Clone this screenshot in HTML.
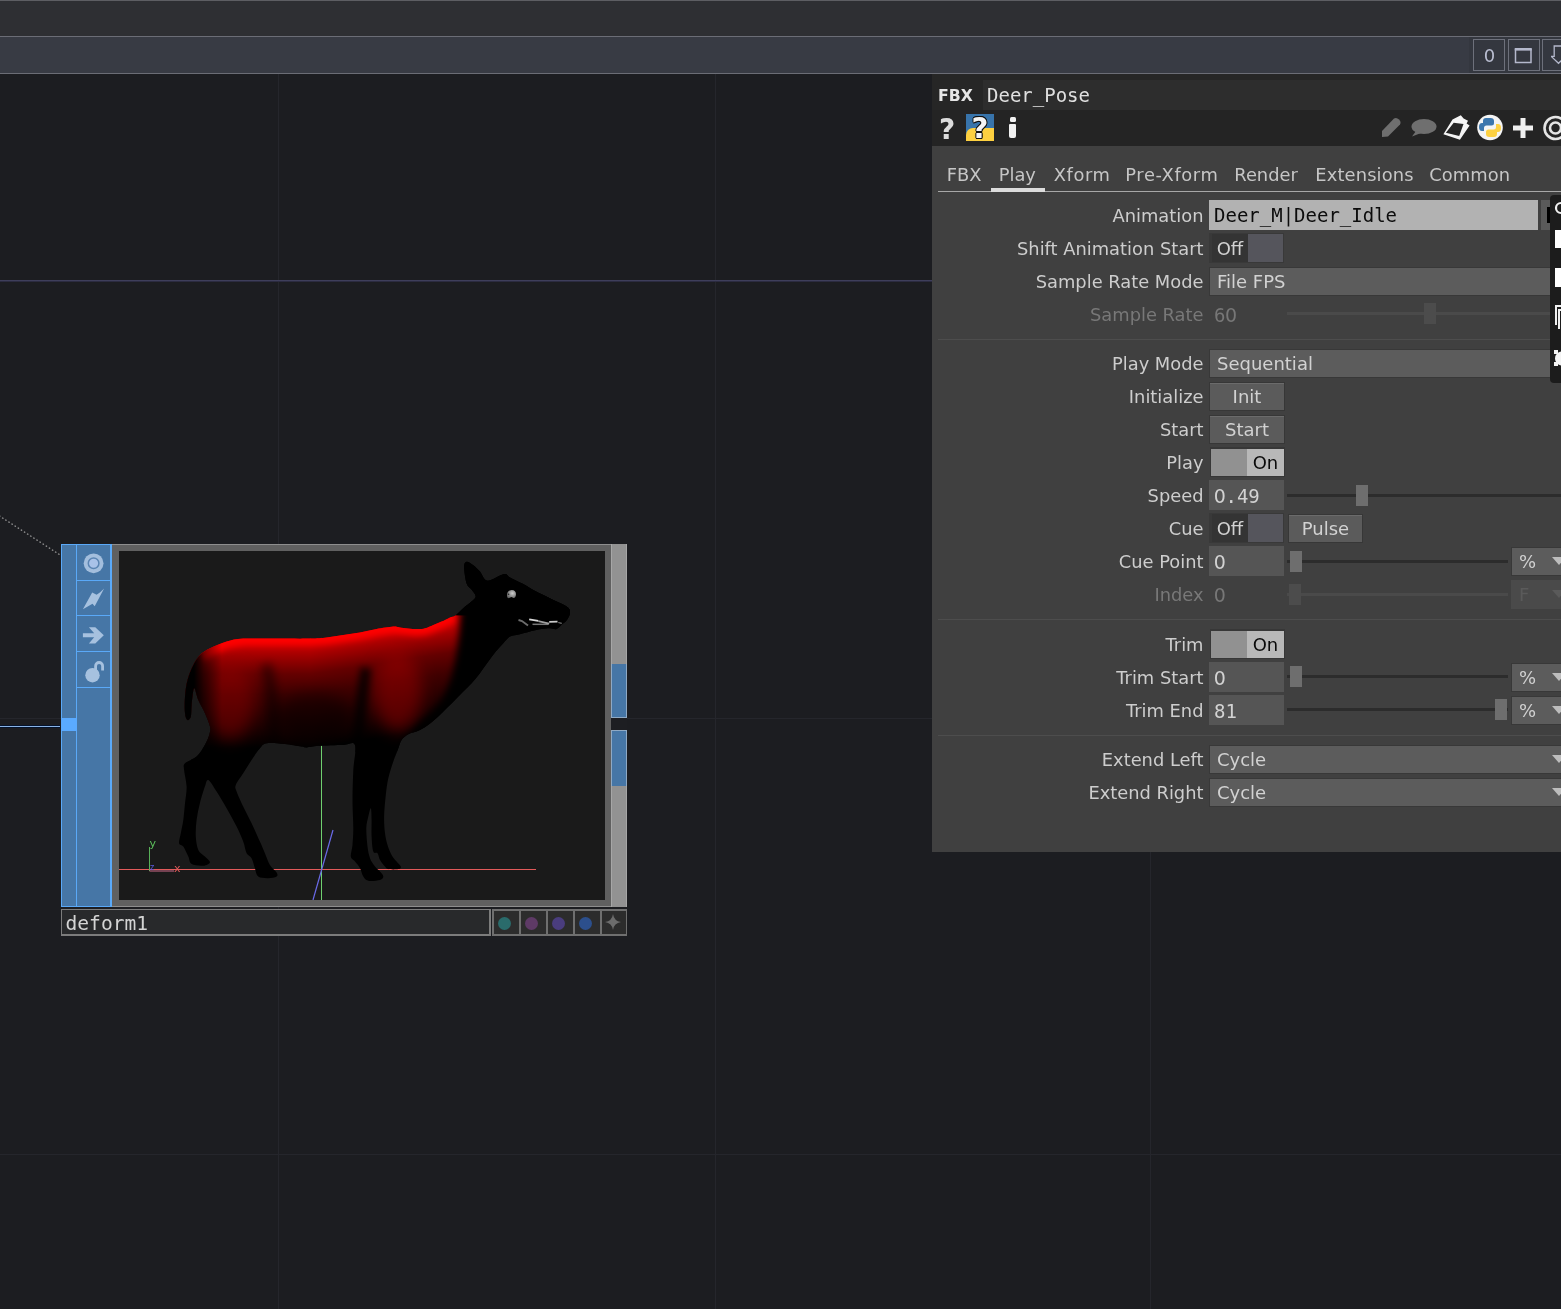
<!DOCTYPE html>
<html><head><meta charset="utf-8"><title>TouchDesigner</title>
<style>
html,body{margin:0;padding:0;}
body{width:1561px;height:1309px;overflow:hidden;background:#1c1d21;position:relative;font-family:"DejaVu Sans","Liberation Sans",sans-serif;font-size:18px;color:#cdcdcd;}
div,span,svg{position:absolute;box-sizing:border-box;}
.mono{font-family:"DejaVu Sans Mono","Liberation Mono",monospace;}
.lbl{right:357.5px;width:300px;text-align:right;height:30px;line-height:32px;font-size:17.85px;white-space:nowrap;color:#cdcdcd;}
.dis{color:#787878;}
.num{left:277px;width:75px;height:30px;background:#555;line-height:32px;padding-left:5px;font-family:"DejaVu Sans Mono","Liberation Mono",monospace;font-size:19px;color:#d2d2d2;}
.dd{left:277px;height:29px;background:#5c5c5c;border:1px solid #383838;line-height:28px;padding-left:7px;color:#d2d2d2;white-space:nowrap;}
.btn{height:29px;background:#5b5b5b;border:1px solid #373737;box-shadow:inset 0 1px 0 #6b6b6b;line-height:28px;text-align:center;color:#d2d2d2;}
.trk{height:3px;background:#2c2c2c;}
.knob{width:12px;height:21px;background:#6e6e6e;}
.sep{left:6px;right:0;height:1px;background:#4d4d4d;}
.arr{width:0;height:0;border-left:7px solid transparent;border-right:7px solid transparent;border-top:8px solid #bdbdbd;}
</style></head><body><div id="root" style="left:0;top:0;width:1561px;height:1309px;will-change:transform;">

<div style="left:0;top:0;width:1561px;height:37px;background:#2e2f33;border-top:1px solid #5d5e63;border-bottom:1px solid #6b6d76;"></div>
<div style="left:0;top:37px;width:1561px;height:37px;background:#383b44;border-bottom:1px solid #6b6d76;"></div>
<div style="left:1469px;top:37px;width:92px;height:36px;background:#34373f;"></div>
<div style="left:1473px;top:39px;width:32px;height:32px;border:1px solid #6d707b;color:#b9bdd0;text-align:center;line-height:31px;font-size:18px;text-indent:1px;">0</div>
<div style="left:1508px;top:39px;width:32px;height:32px;border:1px solid #6d707b;"><svg width="30" height="30" style="left:0;top:0" viewBox="0 0 30 30"><rect x="6.500" y="9.500" width="15.500" height="13" fill="none" stroke="#b4b8cc" stroke-width="1.500"/><rect x="5.750" y="8" width="17" height="2.500" fill="#b4b8cc"/></svg></div>
<div style="left:1542px;top:39px;width:32px;height:32px;border:1px solid #6d707b;"><svg width="20" height="24" style="left:8px;top:5px" viewBox="0 0 20 24"><path d="M3.200 1 H11.800 V11.400 H14.800 L7.500 18.300 L0.200 11.400 H3.200 Z" fill="none" stroke="#b4b8cc" stroke-width="1.300"/></svg></div>
<div style="left:278px;top:74px;width:1px;height:1235px;background:#25262c;"></div>
<div style="left:715px;top:74px;width:1px;height:1235px;background:#25262c;"></div>
<div style="left:1150px;top:74px;width:1px;height:1235px;background:#25262c;"></div>
<div style="left:0;top:718px;width:1561px;height:1px;background:#25262c;"></div>
<div style="left:0;top:1154px;width:1561px;height:1px;background:#25262c;"></div>
<div style="left:0;top:280px;width:1561px;height:1px;background:#3e3e5b;"></div>
<div style="left:0;top:281px;width:1561px;height:1px;background:#2b2b40;"></div>
<svg width="120" height="90" style="left:0;top:505px" viewBox="0 505 120 90"><line x1="-1" y1="515.700" x2="61" y2="555.500" stroke="#9c9c9c" stroke-width="1.300" stroke-dasharray="1.600 2.100"/></svg>
<div style="left:0;top:725px;width:60px;height:3px;background:#05142e;"></div>
<div style="left:0;top:726px;width:60px;height:1px;background:#8ab4e6;"></div>
<div id="node" style="left:61px;top:544px;width:566px;height:363px;">
<div style="left:0;top:0;width:51px;height:363px;background:#4676a6;border:1px solid #5aa9f8;border-right-width:2px;"></div>
<div style="left:15px;top:0;width:1px;height:363px;background:#5aa9f8;"></div>
<div style="left:15px;top:36px;width:35px;height:1px;background:#5aa9f8;"></div>
<div style="left:15px;top:71px;width:35px;height:1px;background:#5aa9f8;"></div>
<div style="left:15px;top:107px;width:35px;height:1px;background:#5aa9f8;"></div>
<div style="left:15px;top:143px;width:35px;height:1px;background:#5aa9f8;"></div>
<div style="left:0;top:174px;width:16px;height:13px;background:#5aaaff;"></div>
<svg width="36" height="144" style="left:15px;top:0" viewBox="0 0 36 144"><circle cx="17.6" cy="19.3" r="9.9" fill="#a3bedd"/><circle cx="17.6" cy="19.3" r="5.300" fill="#a9c2e8" stroke="#5a84b2" stroke-width="1.500"/><path d="M28.1 44.6 L24.2 48.2 L20.6 50.7 L16.2 48.4 L6.9 65.2 L16.5 59.7 L18.7 62.2 Z" fill="#a6c1df"/><path d="M12.9 83.3 H19.3 L27.8 91.3 L19.3 99.5 H12.9 L18.2 93.3 H6.9 V89.3 H18.2 Z" fill="#a6c1df"/><circle cx="16.5" cy="131.2" r="7.2" fill="#a6c1df"/><path d="M19.6 126 V122 a3.500 3.500 0 0 1 7 0 V126.500" fill="none" stroke="#a6c1df" stroke-width="2.800"/></svg>
<div style="left:51px;top:0;width:499px;height:363px;background:#606060;border-top:1px solid #8e8e8e;border-bottom:1px solid #8e8e8e;"></div>
<div style="left:58px;top:7px;width:486px;height:349px;background:#1a1a1a;"></div>
<div style="left:550px;top:0;width:16px;height:363px;background:#929292;border-left:1px solid #a6a6a6;border-right:1px solid #a6a6a6;"></div>
<div style="left:550px;top:120px;width:16px;height:54px;background:#4676a6;border:1px solid #8fa9c4;border-top:none;"></div>
<div style="left:550px;top:174px;width:16px;height:12px;background:#1d1e22;"></div>
<div style="left:550px;top:186px;width:16px;height:56px;background:#4676a6;border:1px solid #8fa9c4;border-bottom:none;"></div>
</div>
<svg width="486" height="349" style="left:119px;top:551px" viewBox="119 551 486 349">
<defs><clipPath id="dc"><path d="M466.6 561.7C468.1 561.4 470.8 563.4 473.0 565.0C475.2 566.6 477.6 569.0 480.0 571.6C482.4 574.2 483.4 580.4 487.4 580.8C491.4 581.2 500.3 574.6 504.1 574.1C507.9 573.6 506.8 575.8 510.0 577.5C513.2 579.2 519.3 582.0 523.2 584.1C527.1 586.2 529.6 588.0 533.2 590.0C536.8 592.0 541.0 593.9 544.9 595.8C548.8 597.7 553.0 599.8 556.6 601.6C560.2 603.4 564.4 605.1 566.6 606.6C568.8 608.1 569.5 609.1 569.9 610.8C570.3 612.5 569.7 614.8 569.0 616.6C568.3 618.4 566.8 620.4 565.7 621.6C564.6 622.9 563.9 622.9 562.4 624.1C560.9 625.4 558.7 628.4 556.6 629.1C554.5 629.8 552.4 628.3 549.9 628.3C547.4 628.3 544.4 628.7 541.6 629.1C538.8 629.5 535.7 630.2 533.2 630.8C530.7 631.3 529.4 631.7 526.6 632.4C523.8 633.1 519.4 634.2 516.6 634.9C513.8 635.6 512.1 635.2 509.9 636.6C507.7 638.0 505.6 640.8 503.3 643.3C501.0 645.8 498.3 648.5 495.8 651.6C493.3 654.7 491.0 658.0 488.3 661.6C485.6 665.2 482.7 669.6 479.9 673.2C477.1 676.8 474.4 680.1 471.6 683.2C468.8 686.3 466.1 688.8 463.3 691.6C460.5 694.4 457.8 697.1 455.0 699.9C452.2 702.7 449.4 705.4 446.6 708.2C443.8 711.0 441.1 714.1 438.3 716.6C435.5 719.1 433.1 721.3 430.0 723.5C426.9 725.7 423.5 728.2 419.9 730.0C416.3 731.8 411.4 732.5 408.3 734.2C405.2 735.9 403.3 737.6 401.6 740.0C399.9 742.4 399.7 744.7 398.3 748.3C396.9 751.9 395.0 756.6 393.3 761.6C391.6 766.6 389.6 772.7 388.3 778.3C387.1 783.9 386.5 788.6 385.8 795.0C385.1 801.4 384.2 810.2 384.1 816.6C384.0 823.0 384.4 828.6 385.0 833.3C385.6 838.0 386.4 841.3 387.5 844.9C388.6 848.5 390.1 852.1 391.6 854.9C393.1 857.7 395.1 859.6 396.6 861.6C398.1 863.6 400.5 865.4 400.8 866.6C401.1 867.9 400.4 868.7 398.3 869.1C396.2 869.5 390.5 869.5 388.3 869.1C386.1 868.7 386.4 868.1 385.0 866.6C383.6 865.1 381.2 862.1 380.0 859.9C378.8 857.7 378.6 854.6 377.5 853.2C376.4 851.8 374.3 854.4 373.3 851.6C372.3 848.8 371.9 841.9 371.6 836.6C371.3 831.3 371.7 824.6 371.6 819.9C371.5 815.2 371.4 808.8 370.8 808.3C370.2 807.8 369.1 813.3 368.3 816.6C367.6 819.9 366.4 823.3 366.3 828.3C366.2 833.3 366.9 841.6 367.5 846.6C368.1 851.6 368.8 854.9 370.0 858.2C371.2 861.5 373.3 864.4 375.0 866.6C376.7 868.8 378.6 869.9 380.0 871.6C381.4 873.3 383.3 875.2 383.3 876.6C383.3 878.0 382.5 879.2 380.0 879.9C377.5 880.6 371.1 881.2 368.3 880.7C365.5 880.2 364.7 878.7 363.3 876.6C361.9 874.5 361.4 870.7 360.0 868.2C358.6 865.7 356.5 863.5 355.0 861.6C353.5 859.7 351.2 859.4 350.8 856.6C350.4 853.8 352.1 849.6 352.5 844.9C352.9 840.2 353.3 835.8 353.3 828.3C353.3 820.8 352.5 809.7 352.5 800.0C352.5 790.3 352.9 779.2 353.3 770.0C353.7 760.8 356.7 749.2 355.0 745.0C353.3 740.8 349.3 744.9 343.2 745.0C337.1 745.1 324.3 745.4 318.2 745.8C312.1 746.2 309.4 747.3 306.6 747.4C303.8 747.5 305.1 747.1 301.5 746.6C297.9 746.1 290.7 744.7 284.9 744.1C279.1 743.5 270.8 742.6 266.6 743.3C262.4 744.0 262.4 745.5 259.9 748.3C257.4 751.1 254.4 755.8 251.6 760.0C248.8 764.2 245.8 769.1 243.2 773.3C240.6 777.5 236.9 782.0 235.8 785.0C234.7 788.0 235.4 788.0 236.6 791.6C237.8 795.2 240.7 801.3 243.2 806.6C245.7 811.9 248.8 817.5 251.6 823.3C254.4 829.1 257.7 836.6 259.9 841.6C262.1 846.6 263.2 849.3 264.9 853.2C266.6 857.1 267.9 861.7 269.9 864.9C271.8 868.1 275.5 870.4 276.6 872.4C277.7 874.4 278.0 875.6 276.6 876.6C275.2 877.6 271.3 878.2 268.2 878.2C265.1 878.2 260.4 878.3 258.2 876.6C256.0 874.9 256.0 871.3 254.9 868.2C253.8 865.1 253.0 860.7 251.6 858.2C250.2 855.7 248.0 856.0 246.6 853.2C245.2 850.4 244.9 846.0 243.2 841.6C241.5 837.2 239.4 832.2 236.6 826.6C233.8 821.0 229.9 814.1 226.6 808.3C223.3 802.5 219.6 796.3 216.6 791.6C213.6 786.9 210.2 780.8 208.3 780.0C206.4 779.2 206.3 782.7 204.9 786.6C203.5 790.5 201.3 797.8 199.9 803.3C198.5 808.8 197.3 814.3 196.6 819.9C195.9 825.5 195.5 831.6 195.8 836.6C196.1 841.6 196.8 846.6 198.3 849.9C199.8 853.2 203.0 854.5 204.9 856.6C206.8 858.7 210.2 860.9 209.9 862.4C209.6 863.9 206.4 865.4 203.3 865.7C200.2 866.0 194.1 865.6 191.6 864.1C189.1 862.6 189.7 859.5 188.3 856.6C186.9 853.7 184.8 848.8 183.3 846.6C181.8 844.4 179.5 845.4 179.1 843.2C178.7 841.0 180.1 837.2 180.8 833.3C181.5 829.4 182.6 824.9 183.3 819.9C184.0 814.9 184.4 808.8 185.0 803.3C185.6 797.8 186.8 792.1 186.6 786.6C186.4 781.1 184.4 773.9 184.1 770.0C183.8 766.1 182.9 765.5 185.0 763.3C187.1 761.1 193.3 759.6 196.6 756.6C199.9 753.6 202.8 748.8 204.9 745.0C207.1 741.2 208.7 737.1 209.5 734.0C210.3 730.9 210.8 730.1 210.0 726.6C209.2 723.1 206.9 717.6 205.0 713.2C203.1 708.8 200.1 704.1 198.3 700.0C196.5 695.9 195.2 687.5 194.1 688.3C193.0 689.1 192.1 700.3 191.6 705.0C191.1 709.7 191.5 714.1 190.8 716.6C190.1 719.1 188.5 720.6 187.5 720.0C186.5 719.4 185.4 717.1 185.0 713.2C184.6 709.3 184.6 702.1 185.0 696.6C185.4 691.1 186.1 685.3 187.5 680.0C188.9 674.7 191.2 669.2 193.3 665.0C195.4 660.8 197.2 657.8 200.0 655.0C202.8 652.2 205.6 650.5 210.0 648.3C214.4 646.1 221.0 643.2 226.6 641.6C232.2 640.0 235.0 639.1 243.3 638.6C251.6 638.1 265.5 638.6 276.6 638.6C287.7 638.6 301.6 638.8 309.9 638.6C318.2 638.4 321.1 638.1 326.6 637.5C332.2 636.9 337.6 635.8 343.2 635.0C348.8 634.2 354.3 633.5 359.9 632.5C365.4 631.5 370.9 630.1 376.5 629.1C382.1 628.1 389.3 626.9 393.2 626.6C397.1 626.3 396.1 627.0 400.0 627.4C403.9 627.8 412.4 629.0 416.6 629.1C420.8 629.2 422.2 629.0 425.0 628.3C427.8 627.6 430.5 626.0 433.3 624.9C436.1 623.8 438.8 622.9 441.6 621.6C444.4 620.4 447.8 618.4 450.0 617.4C452.2 616.4 452.8 617.3 455.0 615.8C457.2 614.3 460.2 610.9 463.0 608.5C465.8 606.1 469.5 603.6 471.6 601.6C473.7 599.6 475.7 598.5 475.8 596.6C475.9 594.7 473.5 592.2 472.0 590.0C470.5 587.8 467.9 587.2 466.6 583.3C465.3 579.4 464.1 570.3 464.1 566.7C464.1 563.1 465.1 562.0 466.6 561.7Z"/></clipPath><linearGradient id="gv" x1="0" y1="636" x2="0" y2="748" gradientUnits="userSpaceOnUse"><stop offset="0" stop-color="#e40000"/><stop offset="0.070" stop-color="#cc0000"/><stop offset="0.180" stop-color="#a00000"/><stop offset="0.340" stop-color="#640000"/><stop offset="0.520" stop-color="#400000"/><stop offset="0.690" stop-color="#2a0000"/><stop offset="0.860" stop-color="#140000"/><stop offset="1" stop-color="#000"/></linearGradient><linearGradient id="gw" x1="310" y1="636" x2="327" y2="746" gradientUnits="userSpaceOnUse"><stop offset="0" stop-color="#e40000"/><stop offset="0.070" stop-color="#cc0000"/><stop offset="0.180" stop-color="#a00000"/><stop offset="0.340" stop-color="#640000"/><stop offset="0.520" stop-color="#400000"/><stop offset="0.690" stop-color="#2a0000"/><stop offset="0.860" stop-color="#140000"/><stop offset="1" stop-color="#000"/></linearGradient><linearGradient id="gn" x1="439" y1="637" x2="453" y2="643.200" gradientUnits="userSpaceOnUse"><stop offset="0" stop-color="#000" stop-opacity="0"/><stop offset="0.5" stop-color="#000" stop-opacity="0.600"/><stop offset="1" stop-color="#000" stop-opacity="1"/></linearGradient><linearGradient id="gn2" x1="450" y1="0" x2="463" y2="0" gradientUnits="userSpaceOnUse"><stop offset="0" stop-color="#000" stop-opacity="0"/><stop offset="1" stop-color="#000" stop-opacity="1"/></linearGradient><linearGradient id="gl" x1="194" y1="0" x2="222" y2="0" gradientUnits="userSpaceOnUse"><stop offset="0" stop-color="#000" stop-opacity="1"/><stop offset="0.350" stop-color="#000" stop-opacity="0.550"/><stop offset="1" stop-color="#000" stop-opacity="0"/></linearGradient><filter id="b3" filterUnits="userSpaceOnUse" x="100" y="540" width="540" height="380"><feGaussianBlur stdDeviation="3.2"/></filter><filter id="b4" filterUnits="userSpaceOnUse" x="100" y="540" width="540" height="380"><feGaussianBlur stdDeviation="3.500"/></filter><filter id="b5" filterUnits="userSpaceOnUse" x="100" y="540" width="540" height="380"><feGaussianBlur stdDeviation="5"/></filter><filter id="b8" filterUnits="userSpaceOnUse" x="100" y="540" width="540" height="380"><feGaussianBlur stdDeviation="8"/></filter><radialGradient id="eye" cx="0.600" cy="0.400" r="0.700"><stop offset="0" stop-color="#cdcdcd"/><stop offset="1" stop-color="#5c5c5c"/></radialGradient></defs>
<line x1="119" y1="869.5" x2="536" y2="869.5" stroke="#e25a5a" stroke-width="1"/>
<line x1="321.5" y1="745" x2="321.5" y2="900" stroke="#6fd06f" stroke-width="1"/>
<line x1="333" y1="830" x2="313" y2="900" stroke="#6a6ae8" stroke-width="1.2"/>
<line x1="149.5" y1="847" x2="149.5" y2="871" stroke="#58b058" stroke-width="1"/>
<line x1="149.5" y1="871" x2="174" y2="871" stroke="#d06a8a" stroke-width="1"/>
<text x="149.500" y="847" font-family='"DejaVu Sans","Liberation Sans",sans-serif' font-size="11" fill="#5cbf5c">y</text>
<text x="174" y="871.700" font-family='"DejaVu Sans","Liberation Sans",sans-serif' font-size="11" fill="#e05a5a">x</text>
<text x="150" y="870" font-family='"DejaVu Sans","Liberation Sans",sans-serif' font-size="8" fill="#5a5ae0">z</text>
<path d="M466.6 561.7C468.1 561.4 470.8 563.4 473.0 565.0C475.2 566.6 477.6 569.0 480.0 571.6C482.4 574.2 483.4 580.4 487.4 580.8C491.4 581.2 500.3 574.6 504.1 574.1C507.9 573.6 506.8 575.8 510.0 577.5C513.2 579.2 519.3 582.0 523.2 584.1C527.1 586.2 529.6 588.0 533.2 590.0C536.8 592.0 541.0 593.9 544.9 595.8C548.8 597.7 553.0 599.8 556.6 601.6C560.2 603.4 564.4 605.1 566.6 606.6C568.8 608.1 569.5 609.1 569.9 610.8C570.3 612.5 569.7 614.8 569.0 616.6C568.3 618.4 566.8 620.4 565.7 621.6C564.6 622.9 563.9 622.9 562.4 624.1C560.9 625.4 558.7 628.4 556.6 629.1C554.5 629.8 552.4 628.3 549.9 628.3C547.4 628.3 544.4 628.7 541.6 629.1C538.8 629.5 535.7 630.2 533.2 630.8C530.7 631.3 529.4 631.7 526.6 632.4C523.8 633.1 519.4 634.2 516.6 634.9C513.8 635.6 512.1 635.2 509.9 636.6C507.7 638.0 505.6 640.8 503.3 643.3C501.0 645.8 498.3 648.5 495.8 651.6C493.3 654.7 491.0 658.0 488.3 661.6C485.6 665.2 482.7 669.6 479.9 673.2C477.1 676.8 474.4 680.1 471.6 683.2C468.8 686.3 466.1 688.8 463.3 691.6C460.5 694.4 457.8 697.1 455.0 699.9C452.2 702.7 449.4 705.4 446.6 708.2C443.8 711.0 441.1 714.1 438.3 716.6C435.5 719.1 433.1 721.3 430.0 723.5C426.9 725.7 423.5 728.2 419.9 730.0C416.3 731.8 411.4 732.5 408.3 734.2C405.2 735.9 403.3 737.6 401.6 740.0C399.9 742.4 399.7 744.7 398.3 748.3C396.9 751.9 395.0 756.6 393.3 761.6C391.6 766.6 389.6 772.7 388.3 778.3C387.1 783.9 386.5 788.6 385.8 795.0C385.1 801.4 384.2 810.2 384.1 816.6C384.0 823.0 384.4 828.6 385.0 833.3C385.6 838.0 386.4 841.3 387.5 844.9C388.6 848.5 390.1 852.1 391.6 854.9C393.1 857.7 395.1 859.6 396.6 861.6C398.1 863.6 400.5 865.4 400.8 866.6C401.1 867.9 400.4 868.7 398.3 869.1C396.2 869.5 390.5 869.5 388.3 869.1C386.1 868.7 386.4 868.1 385.0 866.6C383.6 865.1 381.2 862.1 380.0 859.9C378.8 857.7 378.6 854.6 377.5 853.2C376.4 851.8 374.3 854.4 373.3 851.6C372.3 848.8 371.9 841.9 371.6 836.6C371.3 831.3 371.7 824.6 371.6 819.9C371.5 815.2 371.4 808.8 370.8 808.3C370.2 807.8 369.1 813.3 368.3 816.6C367.6 819.9 366.4 823.3 366.3 828.3C366.2 833.3 366.9 841.6 367.5 846.6C368.1 851.6 368.8 854.9 370.0 858.2C371.2 861.5 373.3 864.4 375.0 866.6C376.7 868.8 378.6 869.9 380.0 871.6C381.4 873.3 383.3 875.2 383.3 876.6C383.3 878.0 382.5 879.2 380.0 879.9C377.5 880.6 371.1 881.2 368.3 880.7C365.5 880.2 364.7 878.7 363.3 876.6C361.9 874.5 361.4 870.7 360.0 868.2C358.6 865.7 356.5 863.5 355.0 861.6C353.5 859.7 351.2 859.4 350.8 856.6C350.4 853.8 352.1 849.6 352.5 844.9C352.9 840.2 353.3 835.8 353.3 828.3C353.3 820.8 352.5 809.7 352.5 800.0C352.5 790.3 352.9 779.2 353.3 770.0C353.7 760.8 356.7 749.2 355.0 745.0C353.3 740.8 349.3 744.9 343.2 745.0C337.1 745.1 324.3 745.4 318.2 745.8C312.1 746.2 309.4 747.3 306.6 747.4C303.8 747.5 305.1 747.1 301.5 746.6C297.9 746.1 290.7 744.7 284.9 744.1C279.1 743.5 270.8 742.6 266.6 743.3C262.4 744.0 262.4 745.5 259.9 748.3C257.4 751.1 254.4 755.8 251.6 760.0C248.8 764.2 245.8 769.1 243.2 773.3C240.6 777.5 236.9 782.0 235.8 785.0C234.7 788.0 235.4 788.0 236.6 791.6C237.8 795.2 240.7 801.3 243.2 806.6C245.7 811.9 248.8 817.5 251.6 823.3C254.4 829.1 257.7 836.6 259.9 841.6C262.1 846.6 263.2 849.3 264.9 853.2C266.6 857.1 267.9 861.7 269.9 864.9C271.8 868.1 275.5 870.4 276.6 872.4C277.7 874.4 278.0 875.6 276.6 876.6C275.2 877.6 271.3 878.2 268.2 878.2C265.1 878.2 260.4 878.3 258.2 876.6C256.0 874.9 256.0 871.3 254.9 868.2C253.8 865.1 253.0 860.7 251.6 858.2C250.2 855.7 248.0 856.0 246.6 853.2C245.2 850.4 244.9 846.0 243.2 841.6C241.5 837.2 239.4 832.2 236.6 826.6C233.8 821.0 229.9 814.1 226.6 808.3C223.3 802.5 219.6 796.3 216.6 791.6C213.6 786.9 210.2 780.8 208.3 780.0C206.4 779.2 206.3 782.7 204.9 786.6C203.5 790.5 201.3 797.8 199.9 803.3C198.5 808.8 197.3 814.3 196.6 819.9C195.9 825.5 195.5 831.6 195.8 836.6C196.1 841.6 196.8 846.6 198.3 849.9C199.8 853.2 203.0 854.5 204.9 856.6C206.8 858.7 210.2 860.9 209.9 862.4C209.6 863.9 206.4 865.4 203.3 865.7C200.2 866.0 194.1 865.6 191.6 864.1C189.1 862.6 189.7 859.5 188.3 856.6C186.9 853.7 184.8 848.8 183.3 846.6C181.8 844.4 179.5 845.4 179.1 843.2C178.7 841.0 180.1 837.2 180.8 833.3C181.5 829.4 182.6 824.9 183.3 819.9C184.0 814.9 184.4 808.8 185.0 803.3C185.6 797.8 186.8 792.1 186.6 786.6C186.4 781.1 184.4 773.9 184.1 770.0C183.8 766.1 182.9 765.5 185.0 763.3C187.1 761.1 193.3 759.6 196.6 756.6C199.9 753.6 202.8 748.8 204.9 745.0C207.1 741.2 208.7 737.1 209.5 734.0C210.3 730.9 210.8 730.1 210.0 726.6C209.2 723.1 206.9 717.6 205.0 713.2C203.1 708.8 200.1 704.1 198.3 700.0C196.5 695.9 195.2 687.5 194.1 688.3C193.0 689.1 192.1 700.3 191.6 705.0C191.1 709.7 191.5 714.1 190.8 716.6C190.1 719.1 188.5 720.6 187.5 720.0C186.5 719.4 185.4 717.1 185.0 713.2C184.6 709.3 184.6 702.1 185.0 696.6C185.4 691.1 186.1 685.3 187.5 680.0C188.9 674.7 191.2 669.2 193.3 665.0C195.4 660.8 197.2 657.8 200.0 655.0C202.8 652.2 205.6 650.5 210.0 648.3C214.4 646.1 221.0 643.2 226.6 641.6C232.2 640.0 235.0 639.1 243.3 638.6C251.6 638.1 265.5 638.6 276.6 638.6C287.7 638.6 301.6 638.8 309.9 638.6C318.2 638.4 321.1 638.1 326.6 637.5C332.2 636.9 337.6 635.8 343.2 635.0C348.8 634.2 354.3 633.5 359.9 632.5C365.4 631.5 370.9 630.1 376.5 629.1C382.1 628.1 389.3 626.9 393.2 626.6C397.1 626.3 396.1 627.0 400.0 627.4C403.9 627.8 412.4 629.0 416.6 629.1C420.8 629.2 422.2 629.0 425.0 628.3C427.8 627.6 430.5 626.0 433.3 624.9C436.1 623.8 438.8 622.9 441.6 621.6C444.4 620.4 447.8 618.4 450.0 617.4C452.2 616.4 452.8 617.3 455.0 615.8C457.2 614.3 460.2 610.9 463.0 608.5C465.8 606.1 469.5 603.6 471.6 601.6C473.7 599.6 475.7 598.5 475.8 596.6C475.9 594.7 473.5 592.2 472.0 590.0C470.5 587.8 467.9 587.2 466.6 583.3C465.3 579.4 464.1 570.3 464.1 566.7C464.1 563.1 465.1 562.0 466.6 561.7Z" fill="#000"/>
<g clip-path="url(#dc)">
<rect x="180" y="600" width="130.500" height="150" fill="url(#gv)"/>
<path d="M310 590 H455.300 V615.300 H469 L468 650 L461 682 L451 700 L440 714 L420 738 L402 752 H310 Z" fill="url(#gw)"/>
<ellipse cx="398" cy="692" rx="24" ry="40" fill="#b00000" fill-opacity="0.420" filter="url(#b8)"/>
<ellipse cx="230" cy="702" rx="24" ry="38" fill="#b00000" fill-opacity="0.360" filter="url(#b8)"/>
<path d="M200.0 655.0 L210.0 648.3 L226.6 641.6 L243.3 638.6 L276.6 638.6 L309.9 638.6 L326.6 637.5 L343.2 635.0 L359.9 632.5 L376.5 629.1 L393.2 626.6 L400.0 627.4 L416.6 629.1 L425.0 628.3 L433.3 624.9 L441.6 621.6 L450.0 617.4 L455.0 615.8" fill="none" stroke="#ff0000" stroke-width="13" filter="url(#b3)"/>
<path d="M266 664 Q276 702 273 750" stroke="#000" stroke-opacity="0.480" stroke-width="11" fill="none" filter="url(#b5)"/>
<path d="M366 668 Q361 700 357 750" stroke="#000" stroke-opacity="0.800" stroke-width="11" fill="none" filter="url(#b4)"/>
<ellipse cx="314" cy="716" rx="38" ry="24" fill="#000" fill-opacity="0.450" filter="url(#b8)"/>
<path d="M461 580 L460 616 Q459 650 451 678 Q444 700 431 712 Q415 727 398 748 L398 775 L620 775 L620 580 Z" fill="#000" filter="url(#b4)"/>
<path d="M455.300 560 V615.300 L620 615.300 V560 Z" fill="#000"/>
<rect x="180" y="630" width="45" height="130" fill="url(#gl)"/>
</g>
<path d="M507 595.500 Q507 590.200 511.800 590 Q516 590.200 516 594.200 Q515.800 597.600 513.500 598 L511.500 597 L508.500 598.200 Q506.800 597.500 507 595.500 Z" fill="url(#eye)"/>
<circle cx="508.600" cy="594.300" r="0.800" fill="#222"/>
<path d="M518.500 620 L522 621 L528 625.600" stroke="#6c6c6c" stroke-width="1.900" fill="none"/>
<path d="M532.500 624.300 L548.500 624.300" stroke="#777" stroke-width="1.500" fill="none"/>
<path d="M529.200 619.300 L538.300 620.900" stroke="#d8d8d8" stroke-width="1.800" fill="none"/>
<path d="M538.300 621.200 L549.200 623.600" stroke="#a0a0a0" stroke-width="1.800" fill="none"/>
<path d="M549.200 621.800 L557.500 621.600" stroke="#c8c8c8" stroke-width="1.700" fill="none"/>
<path d="M558.300 622.500 L561.700 623.400" stroke="#777" stroke-width="1.200" fill="none"/>
</svg>
<div class="mono" style="left:61px;top:909px;width:430px;height:27px;background:#28292b;border:1px solid #7c7c7c;border-width:1px 2px 2px 1px;font-size:19.6px;line-height:27px;padding-left:3.5px;color:#d4d4d4;">deform1</div>
<div style="left:492px;top:909px;width:135px;height:27px;background:#6f6f6f;"></div>
<div style="left:494px;top:911px;width:25px;height:23px;background:#2c2c2c;"></div>
<div style="left:498px;top:917px;width:13px;height:13px;border-radius:7px;background:#2a6b6b;"></div>
<div style="left:521px;top:911px;width:25px;height:23px;background:#2c2c2c;"></div>
<div style="left:525px;top:917px;width:13px;height:13px;border-radius:7px;background:#5e3a66;"></div>
<div style="left:548px;top:911px;width:25px;height:23px;background:#2c2c2c;"></div>
<div style="left:552px;top:917px;width:13px;height:13px;border-radius:7px;background:#4a3d7e;"></div>
<div style="left:575px;top:911px;width:25px;height:23px;background:#2c2c2c;"></div>
<div style="left:579px;top:917px;width:13px;height:13px;border-radius:7px;background:#2c4f8c;"></div>
<div style="left:602px;top:911px;width:24px;height:23px;background:#2c2c2c;"></div>
<svg width="18" height="18" style="left:604px;top:913px" viewBox="-9 -9 18 18"><path d="M0 -8 Q1 -1 8 0 Q1 1 0 8 Q-1 1 -8 0 Q-1 -1 0 -8Z" fill="#6c6c6c"/></svg>
<div id="panel" style="left:932px;top:74px;width:629px;height:778px;background:#404040;overflow:hidden;">
<div style="left:0;top:0;width:629px;height:36px;background:#262626;"></div>
<div style="left:51px;top:6px;width:578px;height:30px;background:#2d2d2d;"></div>
<div style="left:0;top:36px;width:629px;height:36px;background:#242424;"></div>
<div style="left:6px;top:6px;height:30px;line-height:31px;font-weight:bold;font-size:15.7px;color:#e6e6e6;">FBX</div>
<div class="mono" style="left:55px;top:6px;height:30px;line-height:31px;font-size:19px;color:#e0e0e0;">Deer_Pose</div>
<div style="left:7px;top:37px;height:34px;line-height:37px;font-weight:bold;font-size:28px;color:#dcdcdc;">?</div>
<div style="left:34px;top:40px;width:28px;height:27px;background:#3874ab;overflow:hidden;"><div style="left:0;top:14px;width:28px;height:14px;border-radius:7px 0 0 0;background:#fdd040;"></div></div>
<div style="left:30px;top:36px;width:36px;height:36px;line-height:36px;text-align:center;font-weight:bold;font-size:29px;color:#f4f4f4;text-shadow:1px 0 #111,-1px 0 #111,0 1px #111,0 -1px #111,0.700px 0.700px #111,-0.700px 0.700px #111,0.700px -0.700px #111,-0.700px -0.700px #111;">?</div>
<div style="left:78px;top:43px;width:6px;height:5px;background:#f2f2f2;border-radius:1.500px;"></div><div style="left:77.300px;top:49.500px;width:6.600px;height:14.300px;background:#f2f2f2;border-radius:1px 1px 2px 2px;"></div>
<svg width="190" height="36" style="left:439px;top:36px" viewBox="1371 110 190 36"><path d="M1382 131 L1394 118.5 Q1396.5 117 1399 119.5 Q1401.5 122 1400 124.5 L1388 136.5 L1382 137 Z" fill="#6f6f6f"/><ellipse cx="1424" cy="126.5" rx="12.5" ry="7.5" fill="#6f6f6f"/><path d="M1416 131 L1412 136.5 L1421 133Z" fill="#6f6f6f"/><path fill-rule="evenodd" d="M1452.500 119.400 L1460.800 115.300 L1463.600 118.600 L1468 120.800 L1466.600 123.500 L1469.600 125.400 L1459.900 139.700 L1443.400 134.200 Z M1453.700 122.800 L1463.500 124 L1459.200 136 L1445.900 132.700 Z" fill="#f4f4f4"/><circle cx="1490" cy="127.5" r="12.8" fill="#f4f4f4"/><path d="M1489.5 118 h-3.5 q-3 0 -3 3 v2 h-1 q-3 0 -3 4 q0 4 3 4 h2 v-3 q0 -2.5 2.5 -2.5 h5 q2.5 0 2.5 -2.5 v-2 q0 -3 -3.500 -3 Z" fill="#3b76ad"/><path d="M1490.5 137 h3.5 q3 0 3 -3 v-2 h1 q3 0 3 -4 q0 -4 -3 -4 h-2 v3 q0 2.500 -2.500 2.500 h-5 q-2.500 0 -2.500 2.500 v2 q0 3 3.500 3 Z" fill="#fdd142"/><path d="M1520.500 118 h5 v7.500 h7.500 v5 h-7.500 v7.500 h-5 v-7.500 h-7.500 v-5 h7.500 Z" fill="#f0f0f0"/><circle cx="1555.500" cy="128" r="11" fill="none" stroke="#e4e4e4" stroke-width="2.600"/><circle cx="1555.500" cy="128" r="5.500" fill="none" stroke="#e4e4e4" stroke-width="2.600"/></svg>
<div style="left:14.7px;top:85px;height:30px;line-height:32px;font-size:17.85px;letter-spacing:0.00px;color:#c6c6c6;">FBX</div>
<div style="left:66.7px;top:85px;height:30px;line-height:32px;font-size:17.85px;letter-spacing:0.00px;color:#c6c6c6;">Play</div>
<div style="left:121.7px;top:85px;height:30px;line-height:32px;font-size:17.85px;letter-spacing:0.60px;color:#c6c6c6;">Xform</div>
<div style="left:193.3px;top:85px;height:30px;line-height:32px;font-size:17.85px;letter-spacing:0.60px;color:#c6c6c6;">Pre-Xform</div>
<div style="left:302.3px;top:85px;height:30px;line-height:32px;font-size:17.85px;letter-spacing:0.00px;color:#c6c6c6;">Render</div>
<div style="left:383.3px;top:85px;height:30px;line-height:32px;font-size:17.85px;letter-spacing:0.15px;color:#c6c6c6;">Extensions</div>
<div style="left:497.3px;top:85px;height:30px;line-height:32px;font-size:17.85px;letter-spacing:0.10px;color:#c6c6c6;">Common</div>
<div style="left:6px;top:117px;width:623px;height:1px;background:#a8a8a8;"></div>
<div style="left:59px;top:114px;width:54px;height:4px;background:#dcdcdc;"></div>
<div class="lbl" style="top:126px;">Animation</div>
<div class="mono" style="left:277px;top:126px;width:329px;height:30px;background:#b2b2b2;color:#0c0c0c;font-size:19px;line-height:31px;padding-left:5px;">Deer_M|Deer_Idle</div>
<div style="left:609px;top:126px;width:12px;height:30px;background:#5a5a5a;"></div><div style="left:615px;top:133px;width:6px;height:16px;background:#000;"></div>
<div class="lbl" style="top:159px;">Shift Animation Start</div>
<div style="left:277px;top:159px;width:75px;height:30px;background:#55555c;border:1px solid #393939;border-left-width:3px;"><div style="left:0;top:0;width:36px;height:28px;background:#343434;color:#d2d2d2;line-height:30px;text-align:center;">Off</div></div>
<div class="lbl" style="top:192px;">Sample Rate Mode</div>
<div class="dd" style="top:193px;width:360px;">File FPS</div>
<div class="lbl dis" style="top:225px;">Sample Rate</div>
<div class="num" style="top:225px;background:#404040;color:#777;">6<span style="position:static;display:inline-block;width:0.602em;text-align:center;font-family:'DejaVu Sans',sans-serif;letter-spacing:0;text-indent:-0.02em;">0</span></div>
<div class="trk" style="left:355px;top:238px;width:274px;background:#4a4a4a;"></div>
<div class="knob" style="left:492px;top:229px;background:#4c4c4c;"></div>
<div class="sep" style="top:265px;"></div>
<div class="lbl" style="top:274px;">Play Mode</div>
<div class="dd" style="top:275px;width:360px;">Sequential</div>
<div class="lbl" style="top:307px;">Initialize</div>
<div class="btn" style="left:277px;top:308px;width:76px;">Init</div>
<div class="lbl" style="top:340px;">Start</div>
<div class="btn" style="left:277px;top:341px;width:76px;">Start</div>
<div class="lbl" style="top:373px;">Play</div>
<div style="left:278px;top:373px;width:75px;height:30px;background:#919191;border:1px solid #373737;border-top-width:2px;"><div style="left:36px;top:0;width:37px;height:27px;background:#b8b8b8;color:#0a0a0a;line-height:28px;text-align:center;">On</div></div>
<div class="lbl" style="top:406px;">Speed</div>
<div class="num" style="top:406px;"><span style="position:static;display:inline-block;width:0.602em;text-align:center;font-family:'DejaVu Sans',sans-serif;letter-spacing:0;text-indent:-0.02em;">0</span>.49</div>
<div class="trk" style="left:355px;top:420px;width:274px;background:#2c2c2c;"></div>
<div class="knob" style="left:424px;top:411px;background:#6e6e6e;"></div>
<div class="lbl" style="top:439px;">Cue</div>
<div style="left:277px;top:439px;width:75px;height:30px;background:#55555c;border:1px solid #393939;border-left-width:3px;"><div style="left:0;top:0;width:36px;height:28px;background:#343434;color:#d2d2d2;line-height:30px;text-align:center;">Off</div></div>
<div class="btn" style="left:356px;top:440px;width:75px;">Pulse</div>
<div class="lbl" style="top:472px;">Cue Point</div>
<div class="num" style="top:472px;"><span style="position:static;display:inline-block;width:0.602em;text-align:center;font-family:'DejaVu Sans',sans-serif;letter-spacing:0;text-indent:-0.02em;">0</span></div>
<div class="trk" style="left:355px;top:486px;width:221px;background:#2c2c2c;"></div>
<div class="knob" style="left:358px;top:477px;background:#6e6e6e;"></div>
<div class="dd" style="left:579px;top:473px;width:60px;background:#5c5c5c;color:#d0d0d0;">%</div>
<div class="arr" style="left:620px;top:483px;border-top-color:#bdbdbd;"></div>
<div class="lbl dis" style="top:505px;">Index</div>
<div class="num" style="top:505px;background:#404040;color:#777;"><span style="position:static;display:inline-block;width:0.602em;text-align:center;font-family:'DejaVu Sans',sans-serif;letter-spacing:0;text-indent:-0.02em;">0</span></div>
<div class="trk" style="left:355px;top:519px;width:221px;background:#4a4a4a;"></div>
<div class="knob" style="left:357px;top:510px;background:#4c4c4c;"></div>
<div class="dd" style="left:579px;top:506px;width:60px;background:#4a4a4a;color:#5a5a5a;border-color:#4a4a4a;">F</div>
<div class="arr" style="left:620px;top:516px;border-top-color:#5a5a5a;"></div>
<div class="sep" style="top:545px;"></div>
<div class="lbl" style="top:555px;">Trim</div>
<div style="left:278px;top:555px;width:75px;height:30px;background:#919191;border:1px solid #373737;border-top-width:2px;"><div style="left:36px;top:0;width:37px;height:27px;background:#b8b8b8;color:#0a0a0a;line-height:28px;text-align:center;">On</div></div>
<div class="lbl" style="top:588px;">Trim Start</div>
<div class="num" style="top:588px;"><span style="position:static;display:inline-block;width:0.602em;text-align:center;font-family:'DejaVu Sans',sans-serif;letter-spacing:0;text-indent:-0.02em;">0</span></div>
<div class="trk" style="left:355px;top:601px;width:221px;background:#2c2c2c;"></div>
<div class="knob" style="left:358px;top:592px;background:#6e6e6e;"></div>
<div class="dd" style="left:579px;top:589px;width:60px;background:#5c5c5c;color:#d0d0d0;">%</div>
<div class="arr" style="left:620px;top:599px;border-top-color:#bdbdbd;"></div>
<div class="lbl" style="top:621px;">Trim End</div>
<div class="num" style="top:621px;">81</div>
<div class="trk" style="left:355px;top:634px;width:221px;background:#2c2c2c;"></div>
<div class="knob" style="left:563px;top:625px;background:#6e6e6e;"></div>
<div class="dd" style="left:579px;top:622px;width:60px;background:#5c5c5c;color:#d0d0d0;">%</div>
<div class="arr" style="left:620px;top:632px;border-top-color:#bdbdbd;"></div>
<div class="sep" style="top:661px;"></div>
<div class="lbl" style="top:670px;">Extend Left</div>
<div class="dd" style="top:671px;width:360px;">Cycle</div>
<div class="arr" style="left:620px;top:681px;"></div>
<div class="lbl" style="top:703px;">Extend Right</div>
<div class="dd" style="top:704px;width:360px;">Cycle</div>
<div class="arr" style="left:620px;top:714px;"></div>
<div style="left:618px;top:121px;width:20px;height:188px;background:#1c1c1c;border-radius:4px;"></div>
<svg width="11" height="188" style="left:618px;top:121px" viewBox="1550 195 11 188"><circle cx="1561" cy="208" r="5" fill="none" stroke="#f0f0f0" stroke-width="2.200"/><rect x="1555" y="230" width="8" height="18" fill="#fff"/><rect x="1555" y="268" width="8" height="19" fill="#fff"/><path d="M1556 325 V306 H1562 M1559 329 V310 H1562" fill="none" stroke="#f0f0f0" stroke-width="2"/><circle cx="1562" cy="358.500" r="7" fill="#f4f4f4"/><rect x="1554" y="350" width="4" height="4" fill="#f4f4f4"/><rect x="1554" y="362" width="4" height="4" fill="#f4f4f4"/></svg>
</div>
</div></body></html>
